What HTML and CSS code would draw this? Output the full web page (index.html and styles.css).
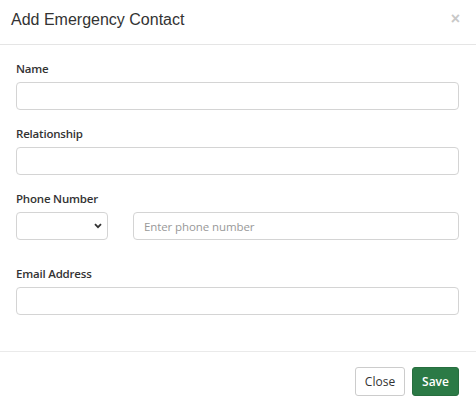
FILE: index.html
```html
<!DOCTYPE html>
<html>
<head>
<meta charset="utf-8">
<link rel="stylesheet" href="styles.css">
</head>
<body>
<div class="modal">
  <div class="modal-header">
    <h4 class="modal-title">Add Emergency Contact</h4>
    <span class="close">×</span>
  </div>
  <div class="modal-body">
    <div class="group">
      <label class="label">Name</label>
      <div class="input"></div>
    </div>
    <div class="group">
      <label class="label">Relationship</label>
      <div class="input"></div>
    </div>
    <div class="group group-phone">
      <label class="label">Phone Number</label>
      <div class="phone-row">
        <div class="input select">
          <svg width="8" height="6" viewBox="0 0 8 6"><path d="M1 1.2 L4 4.2 L7 1.2" fill="none" stroke="#333" stroke-width="1.8"/></svg>
        </div>
        <div class="input phone"><span class="placeholder">Enter phone number</span></div>
      </div>
    </div>
    <div class="group">
      <label class="label">Email Address</label>
      <div class="input"></div>
    </div>
  </div>
  <div class="modal-footer">
    <button class="btn btn-close">Close</button>
    <button class="btn btn-save">Save</button>
  </div>
</div>
</body>
</html>
```
FILE: styles.css
```css
html, body {
  margin: 0;
  padding: 0;
  background: #fff;
}
.modal {
  width: 476px;
  font-family: "Open Sans", "Noto Sans", sans-serif;
}
.modal-header {
  height: 45px;
  border-bottom: 1px solid #e5e5e5;
  display: flex;
  align-items: center;
  justify-content: space-between;
  padding: 0 16px 0 11px;
  box-sizing: border-box;
}
.modal-title {
  margin: 0;
  font-family: "Liberation Sans", Arial, sans-serif;
  font-weight: normal;
  font-size: 16px;
  color: #333;
  position: relative;
  top: -2px;
}
.close {
  font-family: "Liberation Sans", Arial, sans-serif;
  font-size: 16px;
  font-weight: bold;
  color: #c8c8c8;
  position: relative;
  top: -3px;
}
.modal-body {
  padding: 16px 17px 36px 16px;
}
.group {
  margin-bottom: 16px;
}
.group-phone {
  margin-bottom: 26px;
}
.group:last-child {
  margin-bottom: 0;
}
.label {
  display: block;
  height: 16px;
  line-height: 16px;
  font-size: 11.5px;
  font-weight: 600;
  color: #333;
  margin-bottom: 5px;
  letter-spacing: -0.2px;
}
.input {
  height: 28px;
  box-sizing: border-box;
  border: 1px solid #d4d4d4;
  border-radius: 4px;
  background: #fff;
}
.phone-row {
  display: flex;
  gap: 25px;
}
.select {
  width: 92px;
  flex: none;
  display: flex;
  align-items: center;
  justify-content: flex-end;
  padding-right: 5px;
}
.phone {
  flex: 1;
  display: flex;
  align-items: center;
  padding-left: 10px;
}
.placeholder {
  font-size: 11.5px;
  color: #999;
  letter-spacing: -0.1px;
}
.modal-footer {
  border-top: 1px solid #eaeaea;
  display: flex;
  justify-content: flex-end;
  gap: 7px;
  padding: 15px 17px 0 0;
}
.btn {
  height: 29px;
  box-sizing: border-box;
  border-radius: 3px;
  font-family: "Open Sans", "Noto Sans", sans-serif;
  font-size: 12px;
  padding: 0;
  cursor: pointer;
}
.btn-close {
  width: 50px;
  background: #fff;
  border: 1px solid #ccc;
  color: #333;
}
.btn-save {
  width: 47px;
  background: #2b7a46;
  border: 1px solid #276e3f;
  color: #fff;
  font-weight: 600;
}
```
